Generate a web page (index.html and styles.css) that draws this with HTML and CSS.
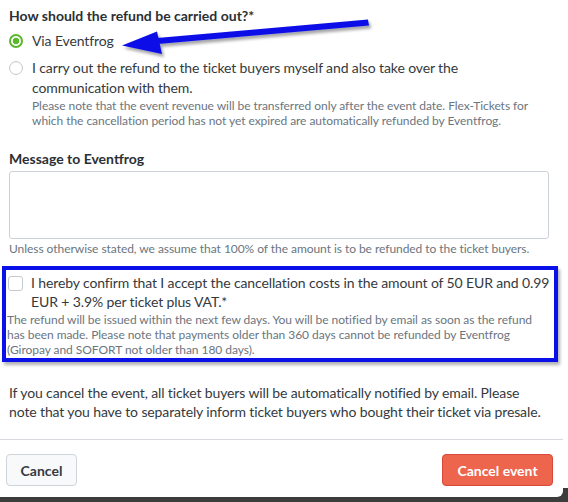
FILE: index.html
```html
<!DOCTYPE html>
<html lang="en">
<head>
<meta charset="utf-8">
<title>Cancel event</title>
<link rel="stylesheet" href="styles.css">
</head>
<body>
<div class="modal">
  <div class="modal-body">
    <div class="field">
      <div class="label">How should the refund be carried out?*</div>
      <div class="option option-first">
        <span class="radio radio-checked"></span>
        <div class="option-text">Via Eventfrog</div>
      </div>
      <div class="option">
        <span class="radio"></span>
        <div class="option-text">
          I carry out the refund to the ticket buyers myself and also take over the communication with them.
          <div class="help help-option">Please note that the event revenue will be transferred only after the event date. Flex-Tickets for which the cancellation period has not yet expired are automatically refunded by Eventfrog.</div>
        </div>
      </div>
    </div>

    <div class="field field-message">
      <div class="label">Message to Eventfrog</div>
      <textarea class="textarea"></textarea>
      <div class="help">Unless otherwise stated, we assume that 100% of the amount is to be refunded to the ticket buyers.</div>
    </div>

    <div class="confirm">
      <div class="check-row">
        <span class="checkbox"></span>
        <div class="check-text">I hereby confirm that I accept the cancellation costs in the amount of 50 EUR and 0.99 EUR + 3.9% per ticket plus VAT.*</div>
      </div>
      <div class="help help-confirm">The refund will be issued within the next few days. You will be notified by email as soon as the refund has been made. Please note that payments older than 360 days cannot be refunded by Eventfrog (Giropay and SOFORT not older than 180 days).</div>
    </div>

    <p class="note">If you cancel the event, all ticket buyers will be automatically notified by email. Please note that you have to separately inform ticket buyers who bought their ticket via presale.</p>
  </div>
  <div class="modal-footer">
    <button class="btn btn-default">Cancel</button>
    <button class="btn btn-danger">Cancel event</button>
  </div>
</div>

<svg class="arrow" width="568" height="80" viewBox="0 0 568 80">
  <defs>
    <filter id="sh" x="-10%" y="-50%" width="120%" height="200%">
      <feDropShadow dx="2" dy="3" stdDeviation="1.5" flood-color="#000" flood-opacity="0.35"/>
    </filter>
  </defs>
  <g filter="url(#sh)" fill="#0a10e8">
    <polygon points="368,19.5 369,25.5 158,44 157,38"/>
    <polygon points="122,45.5 157,31.5 162,54"/>
  </g>
</svg>
</body>
</html>
```

FILE: styles.css
```css
html, body {
  margin: 0;
  padding: 0;
}

body {
  width: 568px;
  height: 502px;
  overflow: hidden;
  position: relative;
  background: linear-gradient(to bottom, #ffffff 488px, #3c3c3c 488px);
  font-family: "Lato", "Liberation Sans", sans-serif;
  color: #343a40;
}

.modal {
  width: 563px;
  height: 497px;
  background: #ffffff;
  border-bottom-right-radius: 6px;
  display: flex;
  flex-direction: column;
}

.modal-body {
  padding: 6px 19px 0 9px;
  flex: 1;
}

.label {
  font-size: 14px;
  line-height: 20px;
  font-weight: 700;
  color: #2b3035;
}

.option {
  display: flex;
  align-items: flex-start;
  margin-top: 7px;
}

.option-first {
  margin-top: 5px;
}

.radio {
  flex: none;
  width: 14px;
  height: 14px;
  box-sizing: border-box;
  border: 1px solid #c5cad0;
  border-radius: 50%;
  background: #fff;
  margin: 3px 9px 0 0;
  box-shadow: inset 0 1px 1px rgba(0, 0, 0, 0.05);
}

.radio-checked {
  border: 2px solid #5cb82c;
  background: radial-gradient(circle, #5cb82c 0, #5cb82c 3px, #ffffff 3.6px);
}

.option-text {
  font-size: 14px;
  letter-spacing: -0.12px;
  line-height: 20px;
  color: #343a40;
}

.help {
  font-size: 12px;
  letter-spacing: -0.05px;
  line-height: 15px;
  color: #6b7580;
}

.help-option {
  margin-top: 0;
}

.field-message {
  margin-top: 21px;
}

.textarea {
  display: block;
  box-sizing: border-box;
  width: 540px;
  height: 68px;
  margin: 2px 0 2px;
  border: 1px solid #cdd2d8;
  border-radius: 3px;
  resize: none;
  background: #fff;
}

.confirm {
  margin: 10px 0 0 -7px;
  width: 556px;
  box-sizing: border-box;
  border: 4px solid #0a10e8;
  padding: 3px 2px 1px 1px;
  box-shadow: 2px 3px 3px rgba(0, 0, 0, 0.3);
}

.check-row {
  display: flex;
  align-items: flex-start;
}

.checkbox {
  flex: none;
  width: 15px;
  height: 15px;
  box-sizing: border-box;
  border: 1px solid #c5cad0;
  border-radius: 3px;
  background: #fff;
  margin: 3px 8px 0 1px;
}

.check-text {
  font-size: 14px;
  letter-spacing: -0.12px;
  line-height: 19px;
  color: #343a40;
}

.help-confirm {
  margin-top: 1px;
}

.note {
  margin: 21px 0 0;
  font-size: 14px;
  letter-spacing: -0.12px;
  line-height: 19px;
  color: #343a40;
}

.modal-footer {
  border-top: 1px solid #d6dadf;
  padding: 14px 10px 11px 6px;
  display: flex;
  justify-content: space-between;
  align-items: center;
}

.btn {
  font-family: "Lato", "Liberation Sans", sans-serif;
  font-size: 14px;
  font-weight: 700;
  height: 32px;
  border-radius: 4px;
  padding: 0 10px;
  cursor: pointer;
}

.btn-default {
  width: 71px;
  background: #f8f9fa;
  border: 1px solid #cfd4da;
  color: #343a40;
}

.btn-danger {
  width: 111px;
  background: #ec654c;
  border: 1px solid #d9473b;
  color: #ffffff;
}

.arrow {
  position: absolute;
  left: 0;
  top: 0;
  pointer-events: none;
}
```
